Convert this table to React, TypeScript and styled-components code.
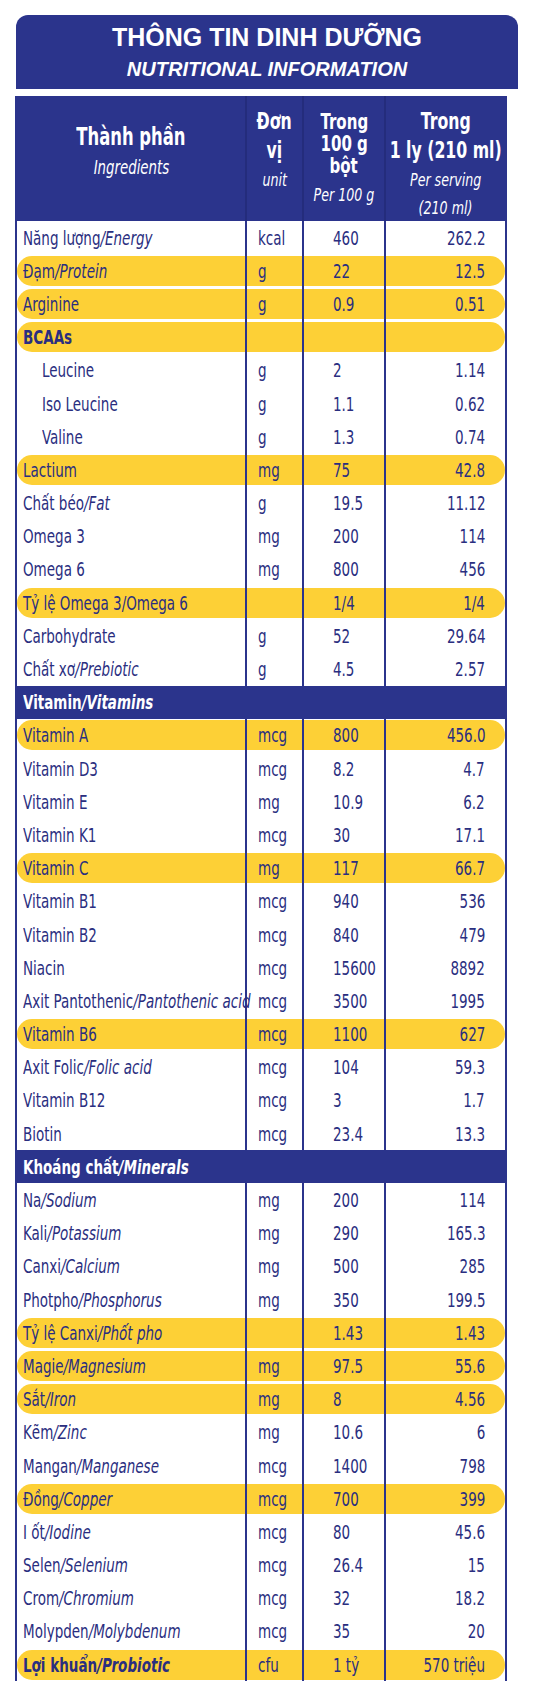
import styled, { createGlobalStyle, css } from 'styled-components';

const BLUE = '#2b348c';
const INK = '#2a2e80';
const YELLOW = '#fdd036';
const NARROW = `"DejaVu Sans Condensed", "DejaVu Sans", sans-serif`;

const GlobalStyle = createGlobalStyle`
  body {
    margin: 0;
    background: #fff;
    font-family: ${NARROW};
    font-stretch: condensed;
  }
`;

const Page = styled.div`
  width: 534px;
  padding-top: 15px;
`;

const TitleBox = styled.div`
  margin: 0 16px;
  height: 74px;
  box-sizing: border-box;
  padding-top: 8px;
  background: ${BLUE};
  border-radius: 12px 12px 0 0;
  color: #fff;
  display: flex;
  flex-direction: column;
  align-items: center;
  font-family: "Liberation Sans", Arial, sans-serif;
  font-stretch: normal;
  font-weight: 700;
`;

const Title = styled.div`
  font-size: 25px;
  line-height: 28px;
`;

const Subtitle = styled.div`
  font-size: 20px;
  line-height: 24px;
  margin-top: 6px;
  font-style: italic;
`;

const Frame = styled.div`
  margin: 7px 0 0 15px;
  width: 488px;
  border-left: 2px solid ${BLUE};
  border-right: 2px solid ${BLUE};
  background: #fff;
`;

const Grid = styled.div`
  display: grid;
  grid-template-columns: 228px 57px 82px 121px;
`;

const HeadRow = styled(Grid)`
  height: 125px;
  background: ${BLUE};
  color: #fff;
`;

const HeadCell = styled.div<{ $top: number; $first?: boolean }>`
  padding-top: ${({ $top }) => $top}px;
  min-width: 0;
  ${({ $first }) => !$first && css`border-left: 2px solid rgba(0, 0, 30, 0.14);`}
`;

const HeadLine = styled.div<{ $lh: number; $size: number; $italic?: boolean; $mt?: number }>`
  display: flex;
  justify-content: center;
  line-height: ${({ $lh }) => $lh}px;
  margin-top: ${({ $mt }) => $mt ?? 0}px;
  font-size: ${({ $size }) => $size}px;
  font-weight: ${({ $italic }) => ($italic ? 400 : 700)};
  font-style: ${({ $italic }) => ($italic ? 'italic' : 'normal')};
`;

/* horizontally squeezed text, standing in for the condensed print face */
const Squeeze = styled.span<{ $sx?: number; $origin?: string }>`
  display: inline-block;
  white-space: nowrap;
  transform: scaleX(${({ $sx }) => $sx ?? 0.75});
  transform-origin: ${({ $origin }) => $origin ?? 'left'} center;
`;

const Row = styled(Grid)<{ $hl?: boolean }>`
  position: relative;
  height: 33.2px;
  color: ${INK};
  font-size: 20px;
  isolation: isolate;
  ${({ $hl }) =>
    $hl &&
    css`
      &::before {
        content: '';
        position: absolute;
        inset: 1.6px 0;
        background: ${YELLOW};
        border-radius: 15px;
        z-index: -1;
      }
    `}
`;

const Cell = styled.div<{ $align?: 'left' | 'right'; $pad?: number; $first?: boolean }>`
  display: flex;
  align-items: center;
  min-width: 0;
  justify-content: ${({ $align }) => ($align === 'right' ? 'flex-end' : 'flex-start')};
  padding-left: ${({ $align, $pad }) => ($align === 'right' ? 0 : $pad ?? 0)}px;
  padding-right: ${({ $align, $pad }) => ($align === 'right' ? $pad ?? 0 : 0)}px;
  ${({ $first }) => !$first && css`border-left: 2px solid ${BLUE};`}
`;

const Label = styled.span<{ $bold?: boolean }>`
  font-weight: ${({ $bold }) => ($bold ? 700 : 400)};
`;

const Eng = styled.span`
  font-style: italic;
`;

const Section = styled.div`
  height: 33.2px;
  background: ${BLUE};
  color: #fff;
  display: flex;
  align-items: center;
  padding-left: 6px;
  font-size: 20px;
  font-weight: 700;
`;

type Item = {
  vi?: string;
  en?: string;
  unit?: string;
  per100?: string;
  serve?: string;
  hl?: boolean;
  bold?: boolean;
  indent?: boolean;
  section?: boolean;
};

const rows: Item[] = [
  { vi: 'Năng lượng', en: 'Energy', unit: 'kcal', per100: '460', serve: '262.2' },
  { vi: 'Đạm', en: 'Protein', unit: 'g', per100: '22', serve: '12.5', hl: true },
  { vi: 'Arginine', unit: 'g', per100: '0.9', serve: '0.51', hl: true },
  { vi: 'BCAAs', hl: true, bold: true },
  { vi: 'Leucine', unit: 'g', per100: '2', serve: '1.14', indent: true },
  { vi: 'Iso Leucine', unit: 'g', per100: '1.1', serve: '0.62', indent: true },
  { vi: 'Valine', unit: 'g', per100: '1.3', serve: '0.74', indent: true },
  { vi: 'Lactium', unit: 'mg', per100: '75', serve: '42.8', hl: true },
  { vi: 'Chất béo', en: 'Fat', unit: 'g', per100: '19.5', serve: '11.12' },
  { vi: 'Omega 3', unit: 'mg', per100: '200', serve: '114' },
  { vi: 'Omega 6', unit: 'mg', per100: '800', serve: '456' },
  { vi: 'Tỷ lệ Omega 3/Omega 6', per100: '1/4', serve: '1/4', hl: true },
  { vi: 'Carbohydrate', unit: 'g', per100: '52', serve: '29.64' },
  { vi: 'Chất xơ', en: 'Prebiotic', unit: 'g', per100: '4.5', serve: '2.57' },
  { vi: 'Vitamin', en: 'Vitamins', section: true },
  { vi: 'Vitamin A', unit: 'mcg', per100: '800', serve: '456.0', hl: true },
  { vi: 'Vitamin D3', unit: 'mcg', per100: '8.2', serve: '4.7' },
  { vi: 'Vitamin E', unit: 'mg', per100: '10.9', serve: '6.2' },
  { vi: 'Vitamin K1', unit: 'mcg', per100: '30', serve: '17.1' },
  { vi: 'Vitamin C', unit: 'mg', per100: '117', serve: '66.7', hl: true },
  { vi: 'Vitamin B1', unit: 'mcg', per100: '940', serve: '536' },
  { vi: 'Vitamin B2', unit: 'mcg', per100: '840', serve: '479' },
  { vi: 'Niacin', unit: 'mcg', per100: '15600', serve: '8892' },
  { vi: 'Axit Pantothenic', en: 'Pantothenic acid', unit: 'mcg', per100: '3500', serve: '1995' },
  { vi: 'Vitamin B6', unit: 'mcg', per100: '1100', serve: '627', hl: true },
  { vi: 'Axit Folic', en: 'Folic acid', unit: 'mcg', per100: '104', serve: '59.3' },
  { vi: 'Vitamin B12', unit: 'mcg', per100: '3', serve: '1.7' },
  { vi: 'Biotin', unit: 'mcg', per100: '23.4', serve: '13.3' },
  { vi: 'Khoáng chất', en: 'Minerals', section: true },
  { vi: 'Na', en: 'Sodium', unit: 'mg', per100: '200', serve: '114' },
  { vi: 'Kali', en: 'Potassium', unit: 'mg', per100: '290', serve: '165.3' },
  { vi: 'Canxi', en: 'Calcium', unit: 'mg', per100: '500', serve: '285' },
  { vi: 'Photpho', en: 'Phosphorus', unit: 'mg', per100: '350', serve: '199.5' },
  { vi: 'Tỷ lệ Canxi', en: 'Phốt pho', per100: '1.43', serve: '1.43', hl: true },
  { vi: 'Magie', en: 'Magnesium', unit: 'mg', per100: '97.5', serve: '55.6', hl: true },
  { vi: 'Sắt', en: 'Iron', unit: 'mg', per100: '8', serve: '4.56', hl: true },
  { vi: 'Kẽm', en: 'Zinc', unit: 'mg', per100: '10.6', serve: '6' },
  { vi: 'Mangan', en: 'Manganese', unit: 'mcg', per100: '1400', serve: '798' },
  { vi: 'Đồng', en: 'Copper', unit: 'mcg', per100: '700', serve: '399', hl: true },
  { vi: 'I ốt', en: 'Iodine', unit: 'mcg', per100: '80', serve: '45.6' },
  { vi: 'Selen', en: 'Selenium', unit: 'mcg', per100: '26.4', serve: '15' },
  { vi: 'Crom', en: 'Chromium', unit: 'mcg', per100: '32', serve: '18.2' },
  { vi: 'Molypden', en: 'Molybdenum', unit: 'mcg', per100: '35', serve: '20' },
  { vi: 'Lợi khuẩn', en: 'Probiotic', unit: 'cfu', per100: '1 tỷ', serve: '570 triệu', hl: true, bold: true },
];

type HProps = { children: string; lh: number; italic?: boolean; mt?: number; size?: number };

const H = ({ children, lh, italic, mt, size }: HProps) => (
  <HeadLine $lh={lh} $italic={italic} $mt={mt} $size={size ?? (italic ? 18 : 23)}>
    <Squeeze $sx={italic ? 0.78 : 0.76} $origin="center">
      {children}
    </Squeeze>
  </HeadLine>
);

export default function App() {
  return (
    <Page>
      <GlobalStyle />
      <TitleBox>
        <Title>THÔNG TIN DINH DƯỠNG</Title>
        <Subtitle>NUTRITIONAL INFORMATION</Subtitle>
      </TitleBox>
      <Frame>
        <HeadRow>
          <HeadCell $first $top={26}>
            <H lh={30} size={24}>
              Thành phần
            </H>
            <H lh={30} italic size={19}>
              Ingredients
            </H>
          </HeadCell>
          <HeadCell $top={11}>
            <H lh={29}>Đơn</H>
            <H lh={29}>vị</H>
            <H lh={29} italic>
              unit
            </H>
          </HeadCell>
          <HeadCell $top={15}>
            <H lh={22} size={22}>
              Trong
            </H>
            <H lh={22} size={22}>
              100 g
            </H>
            <H lh={22} size={22}>
              bột
            </H>
            <H lh={26} mt={5} italic>
              Per 100 g
            </H>
          </HeadCell>
          <HeadCell $top={11}>
            <H lh={29}>Trong</H>
            <H lh={29}>1 ly (210 ml)</H>
            <H lh={29} italic>
              Per serving
            </H>
            <H lh={27} italic>
              (210 ml)
            </H>
          </HeadCell>
        </HeadRow>
        {rows.map((r, i) =>
          r.section ? (
            <Section key={i}>
              <Squeeze>
                {r.vi}
                <Eng>/{r.en}</Eng>
              </Squeeze>
            </Section>
          ) : (
            <Row key={i} $hl={r.hl}>
              <Cell $first $pad={r.indent ? 25 : 6}>
                <Squeeze>
                  <Label $bold={r.bold}>
                    {r.vi}
                    {r.en && <Eng>/{r.en}</Eng>}
                  </Label>
                </Squeeze>
              </Cell>
              <Cell $pad={11}>
                <Squeeze>{r.unit}</Squeeze>
              </Cell>
              <Cell $pad={29}>
                <Squeeze>{r.per100}</Squeeze>
              </Cell>
              <Cell $align="right" $pad={20}>
                <Squeeze $origin="right">{r.serve}</Squeeze>
              </Cell>
            </Row>
          )
        )}
      </Frame>
    </Page>
  );
}
